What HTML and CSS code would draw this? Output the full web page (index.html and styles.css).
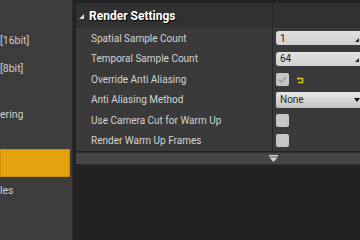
FILE: index.html
```html
<!DOCTYPE html>
<html lang="en">
<head>
    <meta charset="UTF-8">
    <meta name="viewport" content="width=device-width, initial-scale=1.0">
    <title>Render Settings</title>
    <link rel="stylesheet" href="styles.css">
</head>
<body>
    <div class="window">
        <aside class="side">
            <div class="side-item">[16bit]</div>
            <div class="side-item">[8bit]</div>
            <div class="side-item group">ering</div>
            <div class="side-item selected"></div>
            <div class="side-item">les</div>
        </aside>

        <main class="details">
            <div class="category">
                <div class="category-title">
                    <span class="expander"></span>
                    Render Settings
                </div>
                <div class="category-value"></div>
            </div>

            <div class="rows">
                <div class="row">
                    <div class="label">Spatial Sample Count</div>
                    <div class="value">
                        <div class="spin"><span>1</span><span class="drag"></span></div>
                    </div>
                </div>
                <div class="row">
                    <div class="label">Temporal Sample Count</div>
                    <div class="value">
                        <div class="spin"><span>64</span><span class="drag"></span></div>
                    </div>
                </div>
                <div class="row">
                    <div class="label">Override Anti Aliasing</div>
                    <div class="value">
                        <div class="check">
                            <svg width="11" height="11" viewBox="0 0 11 11"><path d="M2 5.8 L4.4 8.2 L9 3" fill="none" stroke="#999" stroke-width="1.6"/></svg>
                        </div>
                        <svg class="reset" width="8" height="7" viewBox="0 0 8 7">
                            <path d="M2.5 1.5 H6.5 V5.5 H2" fill="none" stroke="#c9c51e" stroke-width="1.6"/>
                            <path d="M0.5 1.5 L3 0 L3 3 Z" fill="#c9c51e"/>
                        </svg>
                    </div>
                </div>
                <div class="row">
                    <div class="label">Anti Aliasing Method</div>
                    <div class="value">
                        <div class="combo"><span>None</span><span class="caret"></span></div>
                    </div>
                </div>
                <div class="row">
                    <div class="label">Use Camera Cut for Warm Up</div>
                    <div class="value"><div class="check"></div></div>
                </div>
                <div class="row">
                    <div class="label">Render Warm Up Frames</div>
                    <div class="value"><div class="check"></div></div>
                </div>
            </div>

            <div class="more">
                <svg width="9" height="8" viewBox="0 0 9 8">
                    <rect x="0" y="0" width="9" height="1.5" fill="#d2d2d2"/>
                    <path d="M0.5 2.5 H8.5 L4.5 7 Z" fill="#d2d2d2"/>
                </svg>
            </div>
        </main>
    </div>
</body>
</html>
```

FILE: styles.css
```css
* {
    margin: 0;
    padding: 0;
    box-sizing: border-box;
}

body {
    background: #222;
    font-family: Roboto, 'Noto Sans', sans-serif;
    overflow: hidden;
}

.window {
    display: flex;
    height: 240px;
    width: 360px;
}

/* left list */
.side {
    width: 73px;
    flex-shrink: 0;
    background: #3c3c3c;
    border-right: 1px solid #2c2c2c;
    padding-top: 27px;
    display: flex;
    flex-direction: column;
}

.side-item {
    height: 28px;
    line-height: 28px;
    font-size: 10.5px;
    color: #cccccc;
    white-space: nowrap;
    overflow: hidden;
}

.side-item.group {
    margin-top: 18px;
}

.side-item.selected {
    margin-top: 20px;
    margin-right: 2px;
    background: #e2a30e;
    border: 1px solid #c98f0a;
}

/* details panel */
.details {
    flex: 1;
    margin-left: 3px;
    padding-top: 3px;
    display: flex;
    flex-direction: column;
    overflow: hidden;
}

.category {
    display: grid;
    grid-template-columns: 196px 1fr;
    height: 25px;
    background: #313131;
}

.category-title {
    display: flex;
    align-items: center;
    gap: 5px;
    padding-left: 3px;
    font-size: 12px;
    font-weight: bold;
    color: #fff;
    text-shadow: 1px 1px 1px #000;
    white-space: nowrap;
}

.expander {
    width: 0;
    height: 0;
    border-left: 5px solid transparent;
    border-bottom: 5px solid #d8d8d8;
    margin-top: 1px;
}

.category-value {
    border-left: 1px solid #262626;
}

.rows {
    background: #3a3a3a;
}

.row {
    display: grid;
    grid-template-columns: 196px 1fr;
    height: 20.5px;
}

.label {
    display: flex;
    align-items: center;
    padding-left: 15px;
    font-size: 10px;
    color: #d4d4d4;
    white-space: nowrap;
}

.value {
    display: flex;
    align-items: center;
    gap: 7px;
    padding-left: 3px;
    border-left: 1px solid #262626;
}

.spin {
    width: 90px;
    flex-shrink: 0;
    height: 14px;
    border-radius: 3px;
    background: linear-gradient(#e2e2e2, #d0d0d0);
    display: flex;
    align-items: center;
    justify-content: space-between;
    padding: 0 7px 0 4px;
    font-size: 10px;
    color: #1c1c1c;
}

.drag {
    width: 0;
    height: 0;
    border-left: 4px solid transparent;
    border-bottom: 4px solid #222;
    margin-top: 3px;
}

.combo {
    width: 90px;
    flex-shrink: 0;
    height: 16px;
    border-radius: 2px;
    background: linear-gradient(#e8e8e8, #c2c2c2);
    display: flex;
    align-items: center;
    justify-content: space-between;
    padding: 0 6px 0 4px;
    font-size: 10px;
    color: #2a2a2a;
}

.caret {
    width: 0;
    height: 0;
    border-left: 3px solid transparent;
    border-right: 3px solid transparent;
    border-top: 4px solid #111;
}

.check {
    width: 13px;
    height: 13px;
    flex-shrink: 0;
    border-radius: 2px;
    background: #c6c6c6;
    display: flex;
    align-items: center;
    justify-content: center;
}

.reset {
    margin-top: 2px;
}

.more {
    height: 13px;
    margin-top: 1px;
    background: #464646;
    border-top: 1px solid #2e2e2e;
    border-bottom: 1px solid #2e2e2e;
    padding-left: 193px;
    display: flex;
    align-items: center;
}
```
